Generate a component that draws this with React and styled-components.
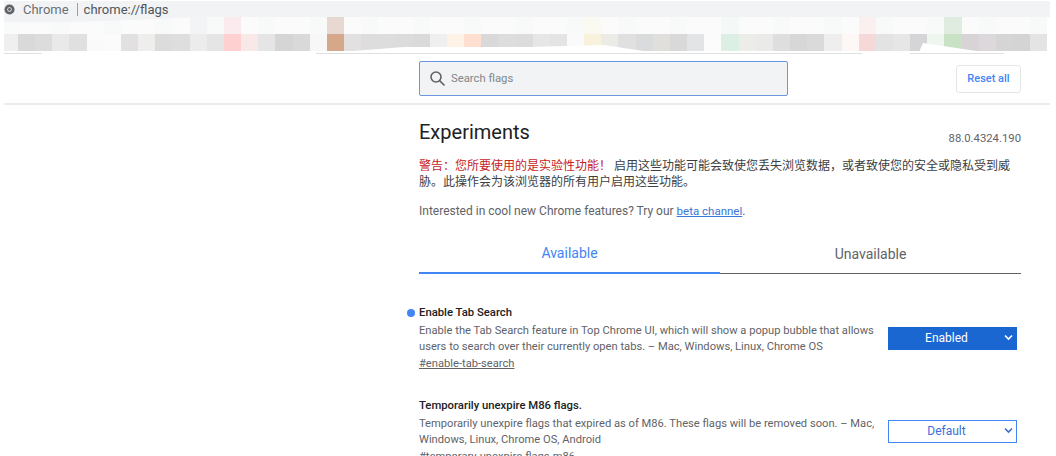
import React from 'react';
import styled, { createGlobalStyle } from 'styled-components';

const GlobalStyle = createGlobalStyle`
  html, body {
    margin: 0;
    padding: 0;
    height: 456px;
    overflow: hidden;
    background: #fff;
    font-family: Roboto, "Noto Sans CJK SC", sans-serif;
  }
`;

const Page = styled.div`
  width: 1056px;
  height: 456px;
  overflow: hidden;
  background: #fff;
`;

const AddressBar = styled.div`
  display: flex;
  align-items: center;
  width: 1046px;
  height: 16px;
  margin: 1px 0 0 4px;
  background: #f1f3f4;
  color: #5f6368;
  font-size: 13px;
`;

const SiteIcon = styled.svg`
  width: 11px;
  height: 11px;
  margin-right: 8px;
`;

const SiteName = styled.span`
  color: #6b7074;
`;

const AddressDivider = styled.span`
  width: 1px;
  height: 13px;
  margin: 0 6px 0 8px;
  background: #9aa0a6;
`;

const AddressUrl = styled.span`
  color: #50555a;
`;

const Smudge = styled.div`
  position: relative;
  width: 1046px;
  height: 37px;
  margin-left: 4px;
`;

const MosaicRow = styled.div`
  display: grid;
  grid-template-columns: 14px repeat(60, 17.17px);
  height: 17px;
`;

const MosaicCell = styled.div`
  background: ${props => props.$color};
`;

const SmudgeOverlay = styled.svg`
  position: absolute;
  top: 0;
  left: 0;
  width: 1046px;
  height: 37px;
`;

const ToolbarRow = styled.div`
  display: flex;
  align-items: center;
  justify-content: space-between;
  width: 602px;
  height: 49px;
  margin-left: 419px;
`;

const ToolbarLine = styled.div`
  margin-left: 4px;
  width: 1046px;
  border-bottom: 2px solid #eaebec;
`;

const SearchBox = styled.div`
  display: flex;
  align-items: center;
  box-sizing: border-box;
  width: 369px;
  height: 35px;
  padding-left: 9px;
  border: 1px solid #6b96e0;
  border-radius: 2px;
  background: #f1f3f4;
  color: #80868b;
  font-size: 11.3px;
`;

const SearchIcon = styled.svg`
  width: 17px;
  height: 17px;
  margin-right: 5px;
`;

const ResetButton = styled.button`
  box-sizing: border-box;
  width: 65px;
  height: 28px;
  padding: 0;
  border: 1px solid #e3e5e7;
  border-radius: 3px;
  background: #fff;
  color: #4285f4;
  font-family: inherit;
  font-size: 11px;
  font-weight: 500;
`;

const Content = styled.main`
  width: 602px;
  margin-left: 419px;
`;

const TitleRow = styled.div`
  display: flex;
  align-items: flex-end;
  justify-content: space-between;
  height: 31px;
  margin-top: 12px;
`;

const Title = styled.h1`
  margin: 0;
  color: #202124;
  font-size: 20px;
  font-weight: 400;
  line-height: 31px;
`;

const Version = styled.span`
  margin-bottom: 1px;
  color: #5f6368;
  font-size: 11.3px;
  line-height: 16px;
`;

const Warning = styled.p`
  margin: 10px 0 0;
  width: 600px;
  color: #3c4043;
  font-size: 12px;
  line-height: 16px;
`;

const WarningLead = styled.span`
  margin-right: 3px;
  color: #c5221f;
`;

const Promo = styled.p`
  margin: 13px 0 0;
  color: #5f6368;
  font-size: 12px;
  line-height: 16px;
`;

const PromoLink = styled.a`
  color: #3a75d8;
  font-size: 11.5px;
  text-decoration: underline;
`;

const Tabs = styled.div`
  display: grid;
  grid-template-columns: 1fr 1fr;
  height: 56px;
  margin-top: 14px;
`;

const Tab = styled.div`
  display: flex;
  align-items: center;
  justify-content: center;
  box-sizing: border-box;
  padding-top: 1px;
  color: ${props => (props.$active ? '#4285f4' : '#5f6368')};
  font-size: 14px;
  border-bottom: ${props => (props.$active ? '2px solid #4285f4' : '1px solid #5f6368')};
  height: ${props => (props.$active ? '41px' : '40px')};
  margin-top: ${props => (props.$active ? '0' : '1px')};
`;

const FlagList = styled.div`
  display: flex;
  flex-direction: column;
  gap: 26px;
  margin-top: 16px;
`;

const Flag = styled.section`
  position: relative;
`;

const FlagDot = styled.span`
  position: absolute;
  top: 4px;
  left: -12px;
  width: 8px;
  height: 8px;
  border-radius: 50%;
  background: #4285f4;
`;

const FlagTitle = styled.h2`
  margin: 0;
  color: #202124;
  font-size: 11.3px;
  font-weight: 500;
  line-height: 16px;
`;

const FlagBody = styled.div`
  display: flex;
  align-items: flex-start;
  justify-content: space-between;
  padding-right: 4px;
`;

const FlagText = styled.div`
  width: 460px;
  margin-top: 2px;
  color: #5f6368;
  font-size: 11.17px;
  line-height: 16px;
`;

const FlagAnchor = styled.a`
  display: block;
  margin-top: 1px;
  color: #5f6368;
  text-decoration: underline;
`;

const FlagSelect = styled.div`
  position: relative;
  box-sizing: border-box;
  width: 129px;
  height: 23px;
  margin-top: 6px;
  padding-right: 12px;
  border: ${props => (props.$enabled ? '1px solid #1a67d2' : '1.5px solid #4285f4')};
  background: ${props => (props.$enabled ? '#1a67d2' : '#fff')};
  color: ${props => (props.$enabled ? '#fff' : '#3a6fd8')};
  font-size: 12px;
  line-height: 20px;
  text-align: center;
`;

const Chevron = styled.svg`
  position: absolute;
  top: 6px;
  right: 3px;
  width: 9px;
  height: 7px;
`;

const WARNING_LEAD = '\u8B66\u544A\uFF1A\u60A8\u6240\u8981\u4F7F\u7528\u7684\u662F\u5B9E\u9A8C\u6027\u529F\u80FD\uFF01';
const WARNING_REST = '\u542F\u7528\u8FD9\u4E9B\u529F\u80FD\u53EF\u80FD\u4F1A\u81F4\u4F7F\u60A8\u4E22\u5931\u6D4F\u89C8\u6570\u636E\uFF0C\u6216\u8005\u81F4\u4F7F\u60A8\u7684\u5B89\u5168\u6216\u9690\u79C1\u53D7\u5230\u5A01\u80C1\u3002\u6B64\u64CD\u4F5C\u4F1A\u4E3A\u8BE5\u6D4F\u89C8\u5668\u7684\u6240\u6709\u7528\u6237\u542F\u7528\u8FD9\u4E9B\u529F\u80FD\u3002';

const ROW_TOP_TINTS = {
  0: '#f9fafa', 11: '#f2f4f5', 13: '#fbebef', 19: '#e8d8d2', 34: '#fafaf2',
  42: '#f4f8f6', 50: '#fbf0f0', 55: '#dfecdf',
};

const ROW_BOTTOM = [
  '#efefef', '#d9d9d9', '#dcdcdc', '#e9e9e9', '#e0e0e0', '#fafafa', '#fbfbfb', '#e2e0e0', '#eeeeec', '#dcdcdc',
  '#dedede', '#ececec', '#e5e5e5', '#ffd0d0', '#f8e8e8', '#e5e5e5', '#d5d5d5', '#d9d9d9', '#f7f7f7', '#d4a888',
  '#e2e0e0', '#dddddd', '#dddddd', '#dcdcdc', '#dadada', '#efefef', '#fff3e8', '#ffdfcf', '#d9d9d9', '#dddddd',
  '#dcdcdc', '#e6e6e6', '#e4e4e4', '#fafafa', '#f8f1dc', '#ecebe5', '#e0e0e0', '#d9dbdc', '#e0dfdb', '#d9d9d9',
  '#e3e4e5', '#fcfcfc', '#dcefe4', '#ecece9', '#eaeae8', '#dedede', '#d7d7d7', '#dadada', '#eeeeee', '#fdf8f6',
  '#f5d8d8', '#e3e3e3', '#e6e6e6', '#d5d5d7', '#eff6f0', '#c9e2c6', '#d8d4d6', '#dcd8dc', '#d5d5d5', '#d4d4d4',
  '#e4e4e4',
];

const ROW_TOP = ROW_BOTTOM.map((_, i) => ROW_TOP_TINTS[i] || (i % 3 === 0 ? '#f8f9f9' : '#fafbfa'));

const Mosaic = () => (
  <Smudge>
    <MosaicRow>
      {ROW_TOP.map((color, i) => <MosaicCell key={i} $color={color} />)}
    </MosaicRow>
    <MosaicRow>
      {ROW_BOTTOM.map((color, i) => <MosaicCell key={i} $color={color} />)}
    </MosaicRow>
    <SmudgeOverlay viewBox="0 0 1046 37">
      <path d="M0 0 V5 C50 6 120 4 190 0Z" fill="#f1f3f4" />
      <path d="M336 35 L400 30 L524 30 L600 28 L646 35Z" fill="#fff" />
      <path d="M915 35 L919 26 L979 35Z" fill="#fff" />
      <path d="M0 37 V36 H38 V37Z M312 37 V36 H858 V37Z M906 37 V36 H1000 V37Z" fill="#dfe0e2" />
    </SmudgeOverlay>
  </Smudge>
);

const ChevronIcon = ({ color }) => (
  <Chevron viewBox="0 0 9 7">
    <polyline points="1,1.5 4.5,5 8,1.5" fill="none" stroke={color} strokeWidth="1.6" />
  </Chevron>
);

export default function App() {
  return (
    <Page>
      <GlobalStyle />
      <AddressBar>
        <SiteIcon viewBox="0 0 12 12">
          <circle cx="6" cy="6" r="5.5" fill="#5f6368" />
          <circle cx="6" cy="6" r="2.4" fill="#f1f3f4" />
          <circle cx="6" cy="6" r="1.6" fill="#5f6368" />
        </SiteIcon>
        <SiteName>Chrome</SiteName>
        <AddressDivider />
        <AddressUrl>chrome://flags</AddressUrl>
      </AddressBar>
      <Mosaic />
      <ToolbarRow>
        <SearchBox>
          <SearchIcon viewBox="0 0 17 17">
            <circle cx="7" cy="7" r="5" fill="none" stroke="#5f6368" strokeWidth="1.6" />
            <line x1="10.6" y1="10.6" x2="15.5" y2="15.5" stroke="#5f6368" strokeWidth="1.6" />
          </SearchIcon>
          Search flags
        </SearchBox>
        <ResetButton>Reset all</ResetButton>
      </ToolbarRow>
      <ToolbarLine />
      <Content>
        <TitleRow>
          <Title>Experiments</Title>
          <Version>88.0.4324.190</Version>
        </TitleRow>
        <Warning>
          <WarningLead>{WARNING_LEAD}</WarningLead>
          {WARNING_REST}
        </Warning>
        <Promo>
          Interested in cool new Chrome features? Try our <PromoLink>beta channel</PromoLink>.
        </Promo>
        <Tabs>
          <Tab $active>Available</Tab>
          <Tab>Unavailable</Tab>
        </Tabs>
        <FlagList>
          <Flag>
            <FlagDot />
            <FlagTitle>Enable Tab Search</FlagTitle>
            <FlagBody>
              <FlagText>
                Enable the Tab Search feature in Top Chrome UI, which will show a popup bubble that allows users to search over their currently open tabs. – Mac, Windows, Linux, Chrome OS
                <FlagAnchor>#enable-tab-search</FlagAnchor>
              </FlagText>
              <FlagSelect $enabled>
                Enabled
                <ChevronIcon color="#fff" />
              </FlagSelect>
            </FlagBody>
          </Flag>
          <Flag>
            <FlagTitle>Temporarily unexpire M86 flags.</FlagTitle>
            <FlagBody>
              <FlagText>
                Temporarily unexpire flags that expired as of M86. These flags will be removed soon. – Mac, Windows, Linux, Chrome OS, Android
                <FlagAnchor>#temporary-unexpire-flags-m86</FlagAnchor>
              </FlagText>
              <FlagSelect>
                Default
                <ChevronIcon color="#3a6fd8" />
              </FlagSelect>
            </FlagBody>
          </Flag>
        </FlagList>
      </Content>
    </Page>
  );
}
